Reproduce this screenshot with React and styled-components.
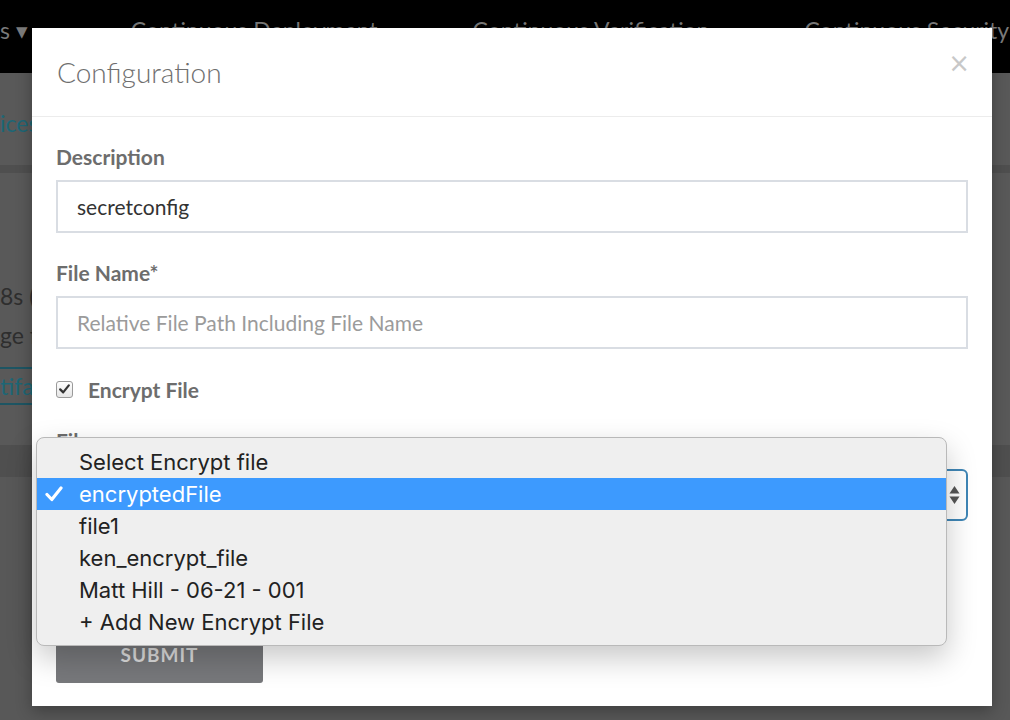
import React from "react";
import styled, { createGlobalStyle } from "styled-components";

const GlobalStyle = createGlobalStyle`
  html, body {
    margin: 0;
    padding: 0;
  }
  body {
    font-family: Lato, "Open Sans", sans-serif;
    background: #585858;
  }
`;

const navItems = ["Continuous Deployment", "Continuous Verification", "Continuous Security"];

const fileOptions = [
  "Select Encrypt file",
  "encryptedFile",
  "file1",
  "ken_encrypt_file",
  "Matt Hill - 06-21 - 001",
  "+ Add New Encrypt File",
];

export default function App() {
  return (
    <>
      <GlobalStyle />
      <Screen>
        <TopNav>
          <NavMenu>s ▾</NavMenu>
          {navItems.map((item) => (
            <NavItem key={item}>{item}</NavItem>
          ))}
        </TopNav>
        <SubHeader>
          <TabLink>ices</TabLink>
        </SubHeader>
        <PageBody>
          <DimText>8s (D</DimText>
          <DimText>ge fo</DimText>
          <ArtifactTab>tifac</ArtifactTab>
        </PageBody>
        <PageBand />

        <Modal>
          <ModalHeader>
            <ModalTitle>Configuration</ModalTitle>
            <CloseButton>×</CloseButton>
          </ModalHeader>
          <ModalBody>
            <Field>
              <Label>Description</Label>
              <TextInput defaultValue="secretconfig" />
            </Field>
            <Field>
              <Label>File Name*</Label>
              <TextInput placeholder="Relative File Path Including File Name" />
            </Field>
            <CheckRow>
              <CheckBox>
                <svg width="11" height="10" viewBox="0 0 11 10">
                  <path d="M1.2 5.4 L4.2 8.4 L9.8 1.4" fill="none" stroke="#333" strokeWidth="2.2" strokeLinecap="round" strokeLinejoin="round" />
                </svg>
              </CheckBox>
              <CheckLabel>Encrypt File</CheckLabel>
            </CheckRow>
            <Field>
              <Label $tight>File</Label>
              <SelectBox>
                <SelectValue>encryptedFile</SelectValue>
                <SelectArrows>
                  <svg width="11" height="20" viewBox="0 0 11 20">
                    <path d="M5.5 1 L10.5 8.5 L0.5 8.5 Z" fill="#555" />
                    <path d="M5.5 19 L10.5 11.5 L0.5 11.5 Z" fill="#555" />
                  </svg>
                </SelectArrows>
              </SelectBox>
            </Field>
            <SubmitButton>SUBMIT</SubmitButton>
          </ModalBody>

          <OptionMenu>
            {fileOptions.map((opt, i) => (
              <OptionRow key={opt} $selected={i === 1}>
                <CheckMark>
                  {i === 1 && (
                    <svg width="18" height="16" viewBox="0 0 18 16">
                      <path d="M2 8.5 L6.8 13.5 L16 2" fill="none" stroke="#fff" strokeWidth="3.2" strokeLinecap="round" strokeLinejoin="round" />
                    </svg>
                  )}
                </CheckMark>
                {opt}
              </OptionRow>
            ))}
          </OptionMenu>
        </Modal>
      </Screen>
    </>
  );
}

const Screen = styled.div`
  position: relative;
  width: 1010px;
  height: 720px;
  overflow: hidden;
  background: #585858;
`;

const TopNav = styled.div`
  height: 73px;
  background: #000;
  display: flex;
  align-items: flex-start;
  gap: 95px;
  padding-top: 16px;
  box-sizing: border-box;
  white-space: nowrap;
`;

const NavMenu = styled.div`
  color: #7a7a7a;
  font-size: 23px;
  margin-right: 8px;
`;

const NavItem = styled.div`
  color: #7a7a7a;
  font-size: 23px;
`;

const SubHeader = styled.div`
  height: 100px;
  box-sizing: border-box;
  padding-top: 36px;
  border-bottom: 8px solid #4f4f4f;
  background: #595959;
`;

const TabLink = styled.div`
  color: #1d6675;
  font-size: 23px;
`;

const PageBody = styled.div`
  display: flex;
  flex-direction: column;
  padding-top: 104px;
  height: 272px;
  box-sizing: border-box;
  background: #595959;
`;

const DimText = styled.div`
  color: #2e2e2e;
  font-size: 23px;
  line-height: 39px;
`;

const ArtifactTab = styled.div`
  margin-top: 12px;
  border-top: 2px solid #1d5563;
  border-bottom: 2px solid #1d5563;
  color: #1d6675;
  font-size: 23px;
  line-height: 34px;
  width: 40px;
`;

const PageBand = styled.div`
  height: 32px;
  background: #4f4f4f;
`;

const Modal = styled.div`
  position: absolute;
  left: 32px;
  top: 28px;
  width: 960px;
  height: 678px;
  background: #fff;
  box-shadow: 0 5px 15px rgba(0, 0, 0, 0.3);
  display: flex;
  flex-direction: column;
`;

const ModalHeader = styled.div`
  height: 89px;
  box-sizing: border-box;
  border-bottom: 1px solid #ececec;
  display: flex;
  align-items: center;
  justify-content: space-between;
  padding: 0 24px 0 25px;
`;

const ModalTitle = styled.h4`
  margin: 0;
  font-size: 28px;
  font-weight: 300;
  color: #6f6f6f;
`;

const CloseButton = styled.span`
  color: #c8c8c8;
  font-family: "DejaVu Sans", sans-serif;
  font-size: 26px;
  line-height: 1;
  margin-top: -18px;
  margin-right: -2px;
`;

const ModalBody = styled.div`
  padding: 28px 24px 0;
  display: flex;
  flex-direction: column;
`;

const Field = styled.div`
  display: flex;
  flex-direction: column;
  margin-bottom: 28px;
`;

const Label = styled.label`
  font-size: 21px;
  font-weight: 700;
  color: #6d6d6d;
  line-height: 24px;
  margin-bottom: ${(p) => (p.$tight ? "16px" : "11px")};
`;

const TextInput = styled.input`
  height: 53px;
  box-sizing: border-box;
  border: 2px solid #d9dde3;
  border-radius: 0;
  padding: 0 19px;
  font-family: Lato, "Open Sans", sans-serif;
  font-size: 21px;
  color: #333;
  outline: none;
  &::placeholder {
    color: #9b9b9b;
  }
`;

const CheckRow = styled.div`
  display: flex;
  align-items: center;
  gap: 15px;
  height: 24px;
  margin-bottom: 28px;
`;

const CheckBox = styled.span`
  width: 15px;
  height: 15px;
  border: 1px solid #9a9a9a;
  border-radius: 3px;
  background: linear-gradient(#fdfdfd, #e6e6e6);
  display: flex;
  align-items: center;
  justify-content: center;
`;

const CheckLabel = styled.span`
  font-size: 21px;
  font-weight: 700;
  color: #6d6d6d;
`;

const SelectBox = styled.div`
  height: 52px;
  box-sizing: border-box;
  border: 2px solid #3f86b6;
  border-radius: 6px;
  display: flex;
  align-items: center;
  justify-content: space-between;
  padding: 0 6px 0 19px;
`;

const SelectValue = styled.span`
  font-size: 21px;
  color: #333;
`;

const SelectArrows = styled.span`
  display: flex;
`;

const SubmitButton = styled.button`
  margin-top: 82px;
  width: 207px;
  height: 52px;
  border: none;
  border-radius: 3px;
  background: #77787b;
  color: #dcdcdc;
  font-family: Lato, "Open Sans", sans-serif;
  font-size: 19px;
  font-weight: 700;
  letter-spacing: 1px;
  padding-bottom: 6px;
`;

const OptionMenu = styled.ul`
  position: absolute;
  left: 4px;
  top: 409px;
  width: 911px;
  height: 209px;
  box-sizing: border-box;
  margin: 0;
  padding: 8px 0;
  list-style: none;
  background: #efefef;
  border: 1px solid #b9b9b9;
  border-radius: 8px;
  box-shadow: 0 12px 30px rgba(0, 0, 0, 0.22);
`;

const OptionRow = styled.li`
  height: 32px;
  display: flex;
  align-items: center;
  font-family: Inter, "Liberation Sans", sans-serif;
  font-size: 22px;
  color: ${(p) => (p.$selected ? "#fff" : "#222")};
  background: ${(p) => (p.$selected ? "#3d9afe" : "transparent")};
`;

const CheckMark = styled.span`
  width: 42px;
  padding-left: 8px;
  box-sizing: border-box;
  display: flex;
  align-items: center;
`;
